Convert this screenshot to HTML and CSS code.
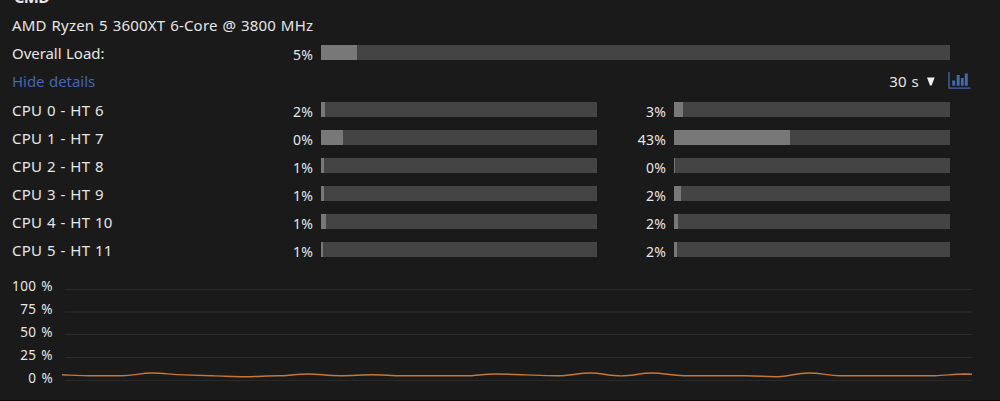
FILE: index.html
```
<!DOCTYPE html>
<html lang="en">

<head>
    <meta charset="UTF-8">
    <meta name="viewport" content="width=device-width, initial-scale=1.0">
    <title>CPU</title>
    <link rel="stylesheet" href="styles.css">
</head>

<body>
    <div class="panel">
        <h2 class="panel-title">CMD</h2>

        <div class="row">
            <span class="model">AMD Ryzen 5 3600XT 6-Core @ 3800 MHz</span>
        </div>
        <div class="row">
            <span class="label label-text">Overall Load:</span>
            <span class="value">5%</span>
            <div class="bar bar-wide"><div class="fill" style="width: 36px"></div></div>
        </div>
        <div class="row row-tools">
            <a class="details-link label-text">Hide details</a>
            <div class="tools">
                <span class="interval">30 s</span>
                <svg class="arrow" width="8" height="9" viewBox="0 0 8 9"><path d="M0 0.500h7.600L4.600 8.500H3z" fill="#eee" /></svg>
                <svg class="chart-icon" width="23" height="18" viewBox="0 0 23 18">
                    <path d="M1 0v16.200h21.500" fill="none" stroke="#4467b0" stroke-width="1.3" />
                    <path d="M4.200 8.500h3v5.200h-3zM8.700 3h3v10.700h-3zM12.900 6h2.800v7.700h-2.800zM16.800 1.500h3v12.200h-3z" fill="#4467b0" />
                </svg>
            </div>
        </div>

        <!-- Core / hyper-thread pairs -->
        <div class="cores">
            <div class="row">
                <span class="label">CPU 0 - HT 6</span>
                <span class="value">2%</span>
                <div class="bar"><div class="fill" style="width: 4px"></div></div>
                <span class="value value-ht">3%</span>
                <div class="bar"><div class="fill" style="width: 9px"></div></div>
            </div>
            <div class="row">
                <span class="label">CPU 1 - HT 7</span>
                <span class="value">0%</span>
                <div class="bar"><div class="fill" style="width: 22px"></div></div>
                <span class="value value-ht">43%</span>
                <div class="bar"><div class="fill" style="width: 116px"></div></div>
            </div>
            <div class="row">
                <span class="label">CPU 2 - HT 8</span>
                <span class="value">1%</span>
                <div class="bar"><div class="fill" style="width: 3px"></div></div>
                <span class="value value-ht">0%</span>
                <div class="bar"><div class="fill" style="width: 1px"></div></div>
            </div>
            <div class="row">
                <span class="label">CPU 3 - HT 9</span>
                <span class="value">1%</span>
                <div class="bar"><div class="fill" style="width: 3px"></div></div>
                <span class="value value-ht">2%</span>
                <div class="bar"><div class="fill" style="width: 7px"></div></div>
            </div>
            <div class="row">
                <span class="label">CPU 4 - HT 10</span>
                <span class="value">1%</span>
                <div class="bar"><div class="fill" style="width: 5px"></div></div>
                <span class="value value-ht">2%</span>
                <div class="bar"><div class="fill" style="width: 4px"></div></div>
            </div>
            <div class="row">
                <span class="label">CPU 5 - HT 11</span>
                <span class="value">1%</span>
                <div class="bar"><div class="fill" style="width: 2px"></div></div>
                <span class="value value-ht">2%</span>
                <div class="bar"><div class="fill" style="width: 3px"></div></div>
            </div>
        </div>

        <!-- Load history -->
        <div class="history">
            <div class="axis">
                <span>100 %</span>
                <span>75 %</span>
                <span>50 %</span>
                <span>25 %</span>
                <span>0 %</span>
            </div>
            <svg class="plot" width="910" height="110" viewBox="62 280 910 110">
                <path class="grid" d="M65 289.400H972M65 312H972M65 334.500H972M65 357.500H972M65 380.400H972" />
                <path class="load" d="M62 374.800C74 375.300 82 375.800 93 375.800H122C134 375.800 140 373 152 373S170 374.500 184 374.900S206 375.700 215 375.900S236 376.700 246 376.700S268 375.800 277 375.800S298 374 308 374S328 375.700 340 375.700S362 374.800 372 374.800S392 375.800 403 375.800H466C476 375.800 484 374 496 374S516 374.700 527 374.900S549 375.800 559 375.800S579 373 590 373S610 375.900 621 375.900S641 373 652 373S672 375.700 684 375.700H745C757 375.700 768 376.700 778 376.700S796 373 809 373S828 375.700 840 375.700H935C945 375.700 953 374 965 374L972 374.300" />
            </svg>
        </div>
    </div>
</body>

</html>
```
FILE: styles.css
```
* {
    margin: 0;
    padding: 0;
    box-sizing: border-box;
}

body {
    background-color: #1a1a1a;
    color: #e6e6e6;
    font-family: "Noto Sans", sans-serif;
    font-size: 15px;
    overflow: hidden;
}

.panel {
    height: 401px;
    padding-left: 12px;
    border-bottom: 1px solid #080808;
    overflow: hidden;
}

.panel-title {
    height: 12px;
    margin-top: -15px;
    margin-bottom: 15px;
    margin-left: 2px;
    font-size: 16px;
    line-height: 24px;
    letter-spacing: -0.5px;
}

.row {
    display: flex;
    align-items: center;
    height: 28px;
}

.model,
.label,
.details-link,
.interval {
    padding-bottom: 2px;
    letter-spacing: 0.2px;
    word-spacing: 0.7px;
    white-space: nowrap;
}

.label {
    width: 240px;
}

.label-text {
    letter-spacing: -0.05px;
}

.cores .label,
.details-link,
.interval {
    padding-bottom: 3px;
}

.value {
    width: 61px;
    margin-right: 8px;
    font-size: 14px;
    letter-spacing: 0.2px;
    text-align: right;
}

.value-ht {
    width: 69px;
}

.bar {
    width: 276px;
    height: 15px;
    margin-bottom: 3px;
    background-color: #444;
}

.bar-wide {
    width: 629px;
}

.fill {
    height: 100%;
    background-color: #787878;
}

.row-tools {
    justify-content: space-between;
    height: 29px;
    padding-right: 29px;
}

.details-link {
    color: #4467b0;
}

.tools {
    display: flex;
    align-items: center;
}

.arrow {
    margin-left: 8px;
    margin-right: 13px;
    margin-bottom: 2px;
}

.chart-icon {
    margin-bottom: 4px;
}

.history {
    display: flex;
    margin-top: 10px;
}

.axis {
    width: 41px;
    margin-right: 9px;
    font-size: 13.5px;
    line-height: 23px;
    letter-spacing: 0.4px;
    word-spacing: 1px;
    text-align: right;
    white-space: nowrap;
}

.axis span {
    display: block;
}

.plot {
    margin-top: 5px;
}

.grid {
    fill: none;
    stroke: #2c2c2c;
}

.load {
    fill: none;
    stroke: #c77735;
    stroke-width: 1.4;
}
```
